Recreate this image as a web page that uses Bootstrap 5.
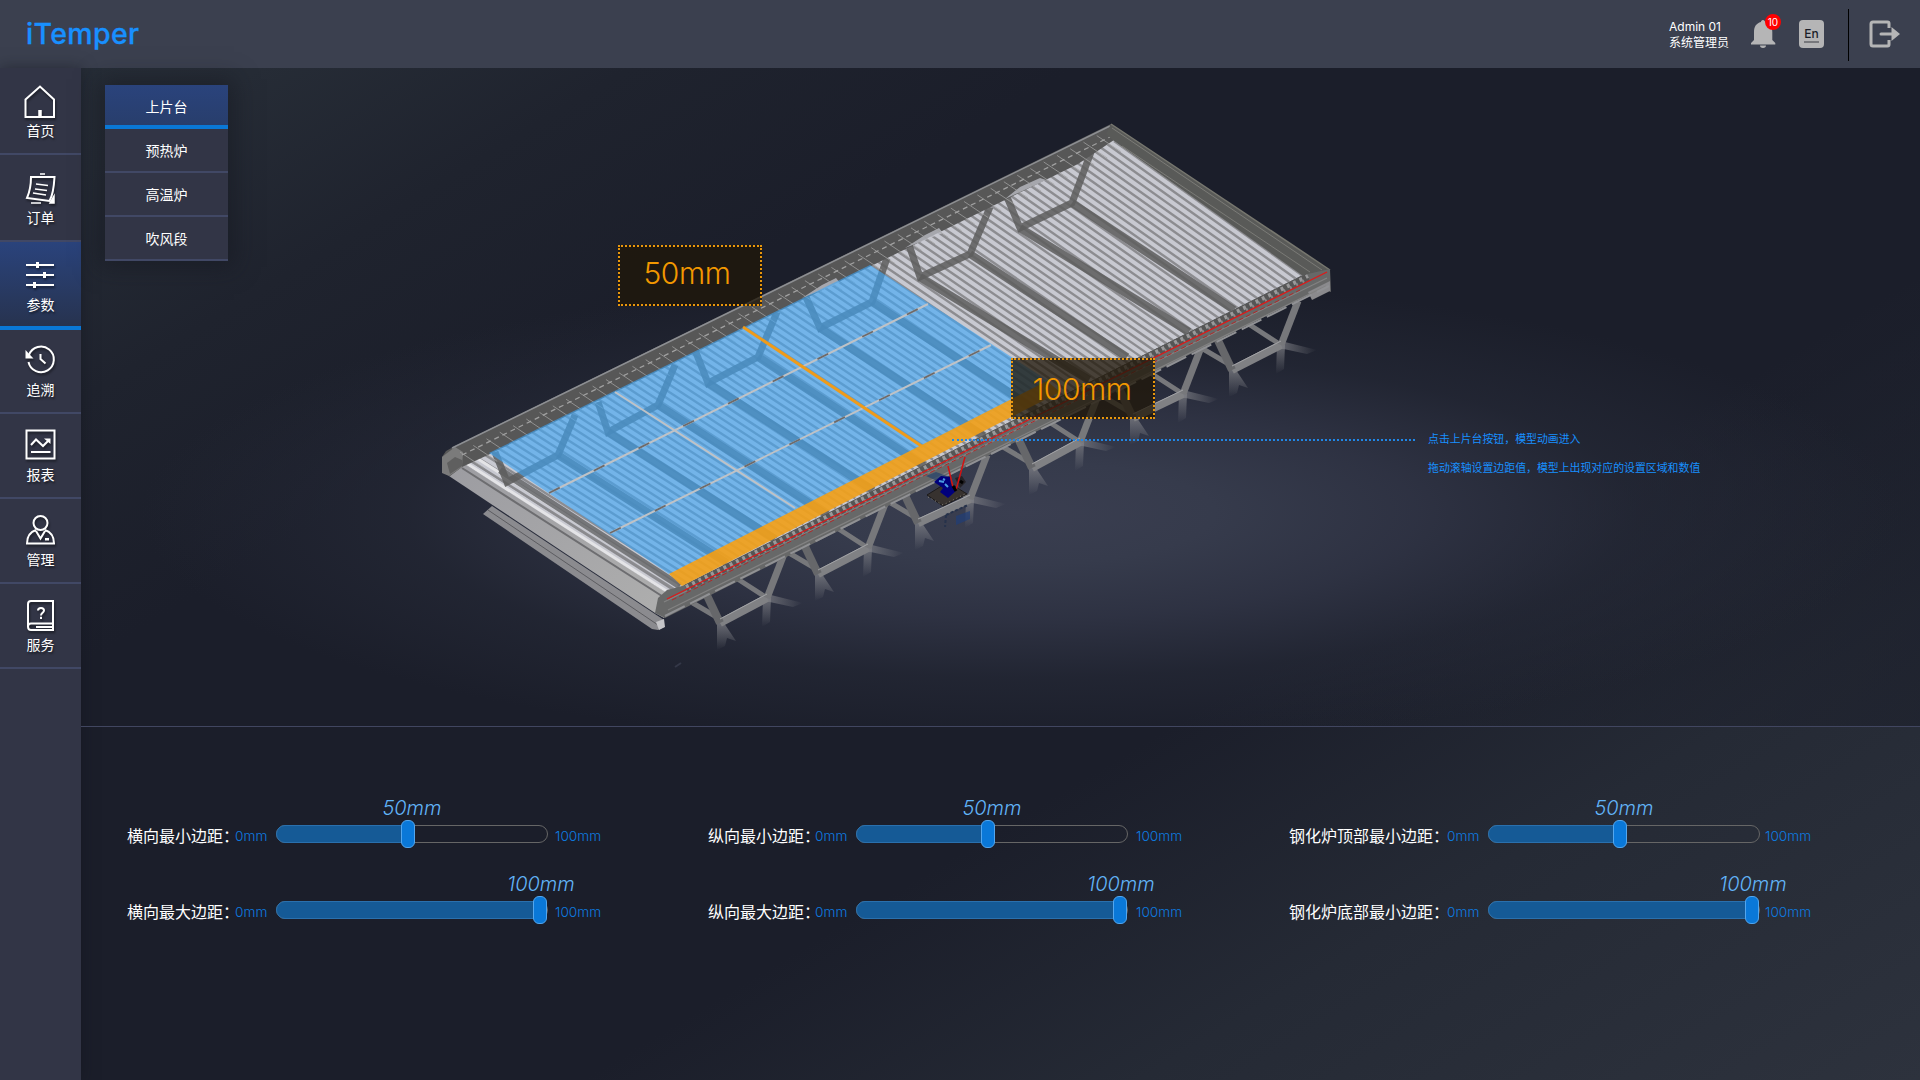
<!DOCTYPE html>
<html lang="zh-CN" data-bs-theme="dark">
<head>
<meta charset="utf-8">
<meta name="viewport" content="width=device-width, initial-scale=1">
<title>iTemper</title>
<link href="https://cdn.jsdelivr.net/npm/bootstrap@5.3.0/dist/css/bootstrap.min.css" rel="stylesheet">
<style>
body{font-family:Inter,"Noto Sans CJK SC",sans-serif;color:#fff;height:1080px;overflow:hidden;background:linear-gradient(149deg,#28303a 0,#262c36 10%,#1f232e 20%,#1b1e2a 32%,#1b1e2a 64%,#252a35 79%,#2d323d 100%)}
.topbar{height:68px;background:#3b404f;padding:0 20px 0 26px}
.brand{font-size:28.5px;font-weight:500;color:#1890ff;line-height:64px;letter-spacing:.35px;-webkit-text-stroke:.3px #1890ff}
.who{font-size:12px;line-height:16px;width:80px;padding-top:2px}
.bell{width:28px;height:68px}
.count{position:absolute;left:16px;top:14px;width:16px;height:16px;font-size:10px;line-height:16px;background:#f00;text-align:center}
.lang{width:25px;height:28px;background:#b5b5b6;color:#1b1e2a;border-radius:4px;font-size:12px;font-weight:500;line-height:27px;margin-left:22px}
.lang span{border-bottom:2px solid #77787c;line-height:14px;display:inline-block}
.vline{width:1px;height:52px;background:#000;margin:2px 20px 0 24px}
.side{width:81px;background:#323546;box-shadow:0 0 14px rgba(18,20,28,.5)}
.side a{height:85px;color:#fff;text-decoration:none;font-size:14px;line-height:20px;border-bottom:2px solid #414865;padding-bottom:12px}
.side a.tall{height:87px}
.side a.short{height:84px}
.side a.on{height:88px;background:linear-gradient(#2a437c,#27334f);border-bottom:4px solid #0a78d6;padding-bottom:11px}
.side svg{margin:0 1px 3px 0;filter:drop-shadow(1px 2px 1px rgba(0,0,0,.45));overflow:visible;fill:none;stroke:#fff;stroke-width:2}
.side span{text-shadow:1px 2px 2px rgba(0,0,0,.5)}
.stage{height:659px;border-bottom:1px solid #414660;background:radial-gradient(ellipse 880px 235px at 940px 445px,#3a3e50 0,#363b4c 22%,rgba(48,52,69,.9) 45%,rgba(38,42,56,.6) 70%,rgba(27,30,42,0) 100%),linear-gradient(90deg,rgba(27,30,42,0) 1100px,rgba(27,30,42,.55))}
.model{left:-81px;top:-68px}
.tabs{left:24px;top:17px;width:123px;box-shadow:0 0 22px 6px rgba(20,22,30,.5)}
.tabs a{height:44px;line-height:44px;font-size:14px;color:#fff;background:#323546;border-bottom:2px solid #414865;text-decoration:none;text-align:center}
.tabs a.on{background:linear-gradient(#2a437c,#283e6c);border-bottom:4px solid #0a78d6}
.callout{width:144px;height:61px;border:2px dotted #e8960c;background:rgba(32,22,8,.76);color:#f39800;font-size:30px;font-weight:300;text-align:center;line-height:53px;letter-spacing:-.4px}
.cross-gap{left:537px;top:177px;padding-right:6px}
.length-gap{left:930px;top:290px;padding:3px 2px 0 0}
.leader{border-top:2px dotted #1f87e8;left:871px;top:371px;width:463px;height:0}
.note{left:1347px;top:363px;color:#1890ff;font-size:10.9px;line-height:16px}
.note p{margin:0 0 13px;white-space:nowrap}
.sliders{padding:82px 0 0 46px}
.sliders .grp{width:581px}
.ctl{height:76px;padding-top:14px}
.ctl .cap{font-size:16px;line-height:26px;width:108px;white-space:nowrap}
.cap span{letter-spacing:-7px}
.mid .cap{width:107px}
.wide .cap{width:158px}
.lim{font-size:13.7px;font-weight:350;color:#0d7be0;line-height:25px;padding-top:1px}
.lo{width:41px}
.hi{padding-left:7px}
.mid .hi{padding-left:8px}
.wide .hi{padding-left:5px}
.track{width:272px;height:18px;border:1px solid #666;border-radius:9px;margin-top:2px}
.fill{position:absolute;left:-1px;top:-1px;height:18px;background:#155a96;border:1px solid #2a70ad;border-radius:9px 0 0 9px}
.knob{position:absolute;top:-6px;width:14px;height:28px;margin-left:-7px;background:#0a78d8;border:1px solid #53a6ee;border-radius:6px}
.val{position:absolute;top:-30px;width:90px;margin-left:-41px;text-align:center;font-size:20px;line-height:24px;font-style:italic;font-weight:330;color:#62b4f8}
</style>
<script src="https://cdn.jsdelivr.net/npm/bootstrap@5.3.0/dist/js/bootstrap.bundle.min.js"></script>
</head>
<body class="d-flex flex-column">
<header class="topbar d-flex align-items-center justify-content-between flex-shrink-0">
  <div class="brand">iTemper</div>
  <div class="d-flex align-items-center">
    <div class="who"><div>Admin 01</div><div>系统管理员</div></div>
    <div class="bell position-relative">
      <svg width="28" height="68" viewBox="0 0 28 68"><path fill="#b5b5b6" d="M14 20c1.300 0 2 1 2 2 5 1.300 7.300 5 7.300 10v8l3 3v1.500H2V43l3-3v-8c0-5 2-8.700 7-10 0-1 .7-2 2-2zM11 45.500h6c0 1.500-1 2.500-3 2.500s-3-1-3-2.500z"/></svg>
      <span class="count rounded-circle">10</span>
    </div>
    <div class="lang text-center"><span>En</span></div>
    <div class="vline"></div>
    <svg width="31" height="30" viewBox="0 0 31 30"><path d="M20 9V4.500Q20 3 18.500 3H4Q2 3 2 5v20q0 2 2 2h14.500q1.500 0 1.500-1.500V21" fill="none" stroke="#b5b5b6" stroke-width="3"/><path d="M12 13.500h10.500V8L31 15l-8.500 7v-5.500H12a1.500 1.500 0 0 1 0-3z" fill="#b5b5b6"/></svg>
  </div>
</header>
<div class="d-flex flex-grow-1">
  <nav class="side d-flex flex-column flex-shrink-0">
    <a href="#" class="tall d-flex flex-column align-items-center justify-content-end"><svg width="34" height="34" viewBox="0 0 34 34"><path d="M2.500 15.500 17 2.500l14 13V33H2.500z"/><path d="M17 26v6" stroke-width="3.500"/></svg><span>首页</span></a>
    <a href="#" class="tall d-flex flex-column align-items-center justify-content-end"><svg width="34" height="34" viewBox="0 0 34 34"><path d="M8 6h23.500c-.5 9-1 17-5 24L4 27c3-7 4-14 4-21z"/><path d="M17 3h5M13 13l12 1.500M12 18l12 1.500M10 22l13 2" stroke-width="1.500"/><path d="M8 32h10M31 25v7h-4z" fill="#fff" stroke-width="1.500"/></svg><span>订单</span></a>
    <a href="#" class="on d-flex flex-column align-items-center justify-content-end"><svg width="34" height="34" viewBox="0 0 34 34"><path d="M3 7h28M3 17h28M3 27h28"/><path d="M14.500 4v6M21.500 14v6M11.500 24v6" stroke-width="3"/></svg><span>参数</span></a>
    <a href="#" class="short d-flex flex-column align-items-center justify-content-end"><svg width="34" height="34" viewBox="0 0 34 34"><path d="M6 12A12.800 12.800 0 1 1 5.500 19"/><path d="M17.500 11v5l5 4.500"/><path d="M2.500 7v8.500h8z" fill="#fff" stroke="none"/></svg><span>追溯</span></a>
    <a href="#" class="d-flex flex-column align-items-center justify-content-end"><svg width="34" height="34" viewBox="0 0 34 34"><path d="M3.500 2.500h28v28h-28z"/><path d="M8 17l5-5.500 7 6.500 6-6M8 24h19.500"/><path d="M21 10.500h6.500V16z" fill="#fff" stroke="none"/></svg><span>报表</span></a>
    <a href="#" class="d-flex flex-column align-items-center justify-content-end"><svg width="34" height="34" viewBox="0 0 34 34"><circle cx="17.500" cy="10" r="7"/><path d="M13 17C7 19 4 23 4 30.500h27C31 23 28 19 22 17M13 18l4.500 7.500L22 18"/><path d="M22 25h4v2.500h-4z" fill="#fff" stroke="none"/></svg><span>管理</span></a>
    <a href="#" class="d-flex flex-column align-items-center justify-content-end"><svg width="34" height="34" viewBox="0 0 34 34"><path d="M30 25.500H8c-4 0-4 6.500 0 6.500h22V3H8Q5 3 5 6v23M13 29h17"/><path d="M15 12.500c0-3.500 6-3.500 6 0 0 2.200-3 2.500-3 5M18 18.800v2.200"/></svg><span>服务</span></a>
  </nav>
  <main class="flex-grow-1">
    <section class="stage position-relative">
      <svg class="model position-absolute" width="1700" height="726" viewBox="0 0 1700 726" aria-hidden="true">
        <defs>
          <linearGradient id="leg" x1="0" y1="0" x2="0" y2="1"><stop offset="0" stop-color="#85868b" stop-opacity=".7"/><stop offset="1" stop-color="#85868b" stop-opacity="0"/></linearGradient>
          <linearGradient id="ray" x1="0" y1="0" x2="1" y2="0"><stop offset="0" stop-color="#85868b" stop-opacity=".7"/><stop offset="1" stop-color="#85868b" stop-opacity="0"/></linearGradient>
          <linearGradient id="panel" x1="0" y1="0" x2="1" y2=".8"><stop offset="0" stop-color="#9c9ca1"/><stop offset="1" stop-color="#adadad"/></linearGradient>
          <clipPath id="bed"><path d="M464 464 489 452 1114 141 1303 275 682 587 667 592z"/></clipPath>
        </defs>
        <g id="legs"></g>
        <!-- end beam and side panel -->
        <path d="M483 514 492 506 664 620 664 627 658 630 652 629z" fill="#8b8b8f"/>
        <path d="M488 510 658 625" stroke="#5c5c60" fill="none"/>
        <path d="M656 622l8-3 1 8-6 3z" fill="#c5c5c8"/>
        <path d="M449 476 464 462 672 596 664 618 655 613z" fill="url(#panel)"/>
        <!-- roller bed -->
        <path d="M464 464 489 450 1114 138 1303 275 682 587 667 592z" fill="#c8c9d1"/>
        <g id="rollers" clip-path="url(#bed)"></g>
        <path d="M466 463 668 592M475 457 677 586" stroke="#e4e4e7" stroke-width="3" fill="none"/>
        <path d="M472 462 673 590" stroke="#8a8a8e" stroke-width="1.500" fill="none"/>
        <path d="M500 470 680 586" stroke="#66676a" stroke-width="7" opacity=".85" fill="none"/>
        <path d="M462 468 665 598" stroke="#6d6d70" stroke-width="2" fill="none"/>
        <g id="under" fill="none" stroke="#5d5d5d" stroke-opacity=".85" clip-path="url(#bed)"></g>
        <!-- back rail -->
        <path d="M442 457 446 451 455 446 1111 124 1117 138 1078 164 490 454 462 467 450 476 442 472z" fill="#575757"/>
        <path d="M1005 199 1020 187 1040 178 1046 180zM905 248l20-13 14-7 4 5zM802 298l20-13 14-7 4 5z" fill="#c8c9d1" opacity=".7"/>
        <path d="M442 457 455 447 463 452 462 467 449 476 442 473z" fill="#7b7b7b"/>
        <path d="M447 463l8-6 7 3v6l-12 8z" fill="#5f5f5f"/>
        <path d="M452 448 1110 126" stroke="#8d8f93" stroke-width="1.500" fill="none"/>
        <path d="M462 455 1112 136" stroke="#a0a0a0" stroke-width="1.300" stroke-dasharray="5 4" fill="none"/>
        <g id="ribs" stroke="#a3a3a3" stroke-width="1" opacity=".75"></g>
        <!-- right rail -->
        <path d="M1111 124 1330 270 1303 276 1114 141 1106 134z" fill="#595a58"/>
        <path d="M1112 128 1322 270M1122 146 1310 272" stroke="#7b7b77" fill="none"/>
        <path d="M1111 124 1330 270" stroke="#77776f" stroke-width="1.500" fill="none"/>
        <!-- front rail -->
        <path d="M655 613 658 598 667 590 682 586 1303 275 1330 269 1331 292 1322 288 665 618z" fill="#676868"/>
        <path d="M1308 292l22-11v10l-18 9z" fill="#8a8a8d"/>
        <path d="M664 602 1327 278M668 610 1326 286" stroke="#828282" stroke-width="1.300" fill="none"/>
        <path d="M665 616 1329 286" stroke="#909194" stroke-width="2" stroke-dasharray="22 6" fill="none"/>
        <path d="M686 588 1308 277" stroke="#555" stroke-width="7" fill="none"/>
        <path d="M686 587 1308 276" stroke="#9a9a9b" stroke-width="4" stroke-dasharray="3 4" fill="none"/>
        <path d="M689 589 1308 279" stroke="#88888a" stroke-width="3" stroke-dasharray="2 5" fill="none"/>
        <path d="M667 599 1327 272" stroke="#e01818" stroke-width="1.200" fill="none"/>
        <path d="M672 600 1300 290" stroke="#b02828" stroke-width="1" stroke-dasharray="5 3" fill="none"/>
        <!-- glass load area -->
        <path d="M489 453 870 265 1050 382 669 574z" fill="#3ca6f8" opacity=".61"/>
        <path d="M549 493 928 304M610 533 991 345M615 392 795 508" stroke="#bfc2c6" stroke-width="2" fill="none"/>
        <path d="M549 493 928 304M610 533 991 345" stroke="#6b6a6c" stroke-width="1.800" stroke-dasharray="12 38" fill="none"/>
        <path d="M743 327 923 447" stroke="#ef9b1a" stroke-width="3" fill="none"/>
        <path d="M669 574 1047 381 1060 392 682 586z" fill="#efa01d" opacity=".93"/>
        <!-- drive unit -->
        <path d="M927 495 948 482 967 494 943 506z" fill="#37322f" stroke="#1c1a1a"/>
        <path d="M928 497l15 8 22-11" fill="none" stroke="#8a8478" stroke-dasharray="1 3"/>
        <path d="M926 476l10-4 14 5 4 4-10 3z" fill="#24416b" opacity=".7"/>
        <path d="M955 478l7-2 4 6-6 6z" fill="#252327"/>
        <path d="M934 482l7-6 9 1 1 8 6 5-9 8-8-6 3-4z" fill="#00007c"/>
        <path d="M939 481l5 1M945 484l3 3M943 479l2 1" stroke="#4a9be0" stroke-width="2"/>
        <path d="M948 466 953 487M965 457 956 490" stroke="#d31212" stroke-width="1.500"/>
        <path d="M953 486l3 5M960 481l3 2" stroke="#000" stroke-width="3"/>
        <path d="M946 515l22-10M946 515l-1 12" stroke="#26324b" stroke-width="2" stroke-dasharray="3 2"/>
        <path d="M956 516l14-5v8l-14 6z" fill="#1f3d78" opacity=".7"/>
        <path d="M675 667l6-4" stroke="#343848" stroke-width="2"/>
      </svg>
      <div class="tabs position-absolute d-flex flex-column">
        <a href="#" class="on">上片台</a><a href="#">预热炉</a><a href="#">高温炉</a><a href="#">吹风段</a>
      </div>
      <div class="callout cross-gap position-absolute">50mm</div>
      <div class="leader position-absolute"></div>
      <div class="callout length-gap position-absolute">100mm</div>
      <div class="note position-absolute"><p>点击上片台按钮，模型动画进入</p><p>拖动滚轴设置边距值，模型上出现对应的设置区域和数值</p></div>
    </section>
    <section class="sliders d-flex">
      <div class="grp">
        <div class="ctl d-flex"><div class="cap">横向最小边距<span>：</span></div><div class="lim lo">0mm</div><div class="track position-relative"><div class="fill" style="width:48.5%"></div><div class="knob" style="left:48.5%"></div><div class="val" style="left:48.5%">50mm</div></div><div class="lim hi">100mm</div></div>
        <div class="ctl d-flex"><div class="cap">横向最大边距<span>：</span></div><div class="lim lo">0mm</div><div class="track position-relative"><div class="fill" style="width:97%"></div><div class="knob" style="left:97.5%"></div><div class="val" style="left:96.300%">100mm</div></div><div class="lim hi">100mm</div></div>
      </div>
      <div class="grp mid">
        <div class="ctl d-flex"><div class="cap">纵向最小边距<span>：</span></div><div class="lim lo">0mm</div><div class="track position-relative"><div class="fill" style="width:48.5%"></div><div class="knob" style="left:48.5%"></div><div class="val" style="left:48.5%">50mm</div></div><div class="lim hi">100mm</div></div>
        <div class="ctl d-flex"><div class="cap">纵向最大边距<span>：</span></div><div class="lim lo">0mm</div><div class="track position-relative"><div class="fill" style="width:97%"></div><div class="knob" style="left:97.5%"></div><div class="val" style="left:96.300%">100mm</div></div><div class="lim hi">100mm</div></div>
      </div>
      <div class="grp wide">
        <div class="ctl d-flex"><div class="cap">钢化炉顶部最小边距<span>：</span></div><div class="lim lo">0mm</div><div class="track position-relative"><div class="fill" style="width:48.5%"></div><div class="knob" style="left:48.5%"></div><div class="val" style="left:48.5%">50mm</div></div><div class="lim hi">100mm</div></div>
        <div class="ctl d-flex"><div class="cap">钢化炉底部最小边距<span>：</span></div><div class="lim lo">0mm</div><div class="track position-relative"><div class="fill" style="width:97%"></div><div class="knob" style="left:97.5%"></div><div class="val" style="left:96.300%">100mm</div></div><div class="lim hi">100mm</div></div>
      </div>
    </section>
  </main>
</div>
<script>
const put = (id, s) => document.getElementById(id).innerHTML = s;
const mix = (a, b, t) => a + (b - a) * t;

// Rollers run from the back rail to the front rail; the ribs are their ends seen through the back rail.
let rollers = '', ribs = '';
for (let i = 0; i <= 98; i++) {
  const t = i / 98;
  const x1 = mix(464, 1114, t), y1 = mix(464, 141, t), x2 = mix(667, 1303, t), y2 = mix(592, 276, t);
  rollers += `<path d="M${x1} ${y1}L${x2} ${y2}" stroke="#8c8c90" stroke-width="2.400"/>`;
  if (i % 2 === 0) ribs += `<path d="M${x1 - 4} ${y1 - 12}l24 16"/>`;
}
put('rollers', rollers);
put('ribs', ribs);

// Support frames seen through the rollers.
const frames = [
  [495,452,507,482,558,455,575,415,727,563,0,0],
  [598,402,608,432,658,405,675,365,827,515,775,539],
  [695,350,708,383,758,357,777,312,924,466,873,490],
  [805,295,820,328,872,302,887,258,1036,410,984,436],
  [909,245,920,277,970,254,990,207,1127,357,1089,380],
  [1007,197,1020,228,1072,203,1091,152,1234,310,1189,332]
];
put('under', frames.map(f =>
  `<path stroke-width="7" d="M${f[0]} ${f[1]}L${f[2]} ${f[3]} ${f[4]} ${f[5]} ${f[6]} ${f[7]}"/><path stroke-width="8" d="M${f[4]} ${f[5]}L${f[8]} ${f[9]}"/>` +
  (f[10] ? `<path stroke-width="8" d="M${f[2]} ${f[3]}L${f[10]} ${f[11]}"/>` : '')).join(''));

// Floor supports below the front rail.
const feet = [[720,623,767,598],[818,574,868,548],[918,523,970,499],[1032,468,1080,442],[1133,418,1183,394],[1232,370,1281,345]];
put('legs', feet.map(([a, b, c, d]) =>
  `<path fill="url(#leg)" d="M${a-3} ${b}h7l12 18-9 -3-2 8-8 4z"/><path fill="url(#leg)" d="M${c-4} ${d}h8l-1 24-8 5z"/><path fill="url(#ray)" d="M${c} ${d-4}l36 9-10 4-28 -6z"/>` +
  `<g fill="none" stroke="#77787b"><path stroke-width="5" d="M${a-34} ${b-24}L${a} ${b-4}M${c-34} ${d-22}L${c} ${d}"/><path stroke-width="8" stroke="#808184" d="M${a} ${b}L${c} ${d}"/><path stroke-width="7" d="M${c} ${d}l17 -44"/><path stroke-width="8" stroke="#66676a" d="M${a-17} ${b-36}L${a} ${b}"/></g>` +
  `<path stroke="#a2a3a6" d="M${a} ${b-4}L${c} ${d-4}"/>`).join(''));
</script>
</body>
</html>
